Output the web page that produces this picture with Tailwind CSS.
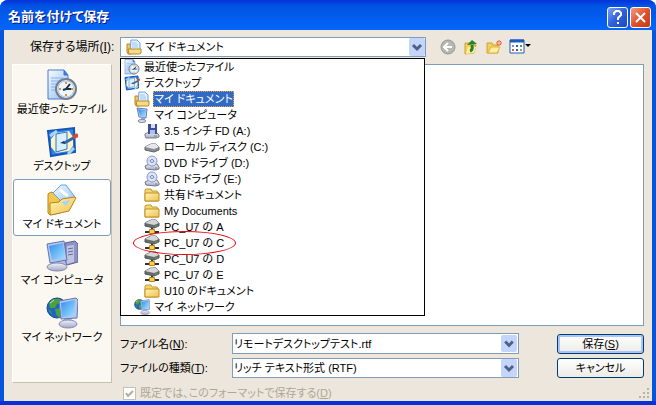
<!DOCTYPE html>
<html lang="ja">
<head>
  <meta charset="UTF-8">
  <meta name="viewport" content="width=device-width, initial-scale=1.0">
  <title>名前を付けて保存</title>
  <!-- Tailwind CSS -->
  <script src="https://cdn.jsdelivr.net/npm/@tailwindcss/browser@4"></script>
</head>
<body class="bg-white font-['Liberation_Sans','Noto_Sans_CJK_JP',sans-serif] text-[11px] leading-4 text-black [font-feature-settings:'palt']">

  <!-- Icon set -->
  <svg class="absolute size-0" aria-hidden="true">
    <defs>
      <linearGradient id="gFolder" x1="0" y1="0" x2="1" y2="1"><stop offset="0" stop-color="#fff6b8"/><stop offset="1" stop-color="#eec04c"/></linearGradient>
      <linearGradient id="gPage" x1="0" y1="0" x2="1" y2="1"><stop offset="0" stop-color="#f4fbff"/><stop offset="1" stop-color="#8fbdf2"/></linearGradient>
      <linearGradient id="gScreen" x1="0" y1="0" x2="1" y2="1"><stop offset="0" stop-color="#2f8df0"/><stop offset="1" stop-color="#a4e2ff"/></linearGradient>
      <linearGradient id="gMetal" x1="0" y1="0" x2="0" y2="1"><stop offset="0" stop-color="#f2f3fa"/><stop offset="1" stop-color="#a2a6c4"/></linearGradient>
    </defs>
    <symbol id="recent" viewBox="0 0 32 32">
      <path d="M2 1h16l4 5v24H2z" fill="url(#gPage)" stroke="#4a7cc8"/>
      <path d="M18 1v5h4" fill="#3d78d8" stroke="#3d78d8"/>
      <path d="M5 9h12M5 12h9M5 15h6M5 18h5M5 21h5" stroke="#84b0ea"/>
      <circle cx="20" cy="20" r="10" fill="#dcecf8" stroke="#747c92" stroke-width="2"/>
      <circle cx="20" cy="20" r="8" fill="#e9f7ff" stroke="#b9c4d6"/>
      <path d="M20 13v2M20 25v2M13 20h2M25 20h2" stroke="#e88c30" stroke-width="2"/>
      <path d="M24 15l-4 5 5 0M20 20l-3 1" fill="none" stroke="#203050" stroke-width="2"/>
    </symbol>
    <symbol id="desktop" viewBox="0 0 32 32">
      <path d="M2 5L28 2l1 24L5 30z" fill="#2f83e4" stroke="#1456b8" stroke-width="2"/>
      <path d="M4 10l7-5M22 28l6-6" stroke="#a5d4ff" stroke-width="3"/>
      <path d="M10 7l13-2 4 6v9l-4 5-13 2-5-6v-8z" fill="#fff3c4"/>
      <path d="M10 8l11-2v17l-11 3z" fill="#d8efff" stroke="#2b74d0" stroke-width="1"/>
      <path d="M18 17l4-2 7-4" fill="none" stroke="#3468a8" stroke-width="3"/>
      <path d="M27 11l5-2" stroke="#e0442c" stroke-width="4"/>
      <path d="M14 17l4-2 1 3z" fill="#16345c"/>
    </symbol>
    <symbol id="docsOpen" viewBox="0 0 32 32">
      <path d="M2 10l3-2 5 2 4-1v20L4 31l-2-2z" fill="#f3c850" stroke="#b98418"/>
      <path d="M15 1h5l9 12-9 9L7 9z" fill="url(#gPage)" stroke="#5fa4e4"/>
      <path d="M14 6l8 6" stroke="#fff" stroke-width="3"/>
      <path d="M4 19l9-1 3-3 13-2 1 1-7 13-18 4-1-2z" fill="url(#gFolder)" stroke="#b98418"/>
      <path d="M15 18l9-2-4 6z" fill="#a4d4fa"/>
    </symbol>
    <symbol id="computer" viewBox="0 0 32 32">
      <path d="M19 3l10-2 3 3v18l-11 3-2-3z" fill="#8d93c4" stroke="#5a609c"/>
      <path d="M21 6l7-1v17l-7 2z" fill="#c0c5e4"/>
      <path d="M22 9l5-1M22 12l5-1M22 15l5-1" stroke="#636a9e"/>
      <path d="M10 19l8-1 2 7h-9z" fill="#b9bfdd"/>
      <ellipse cx="11" cy="27" rx="10" ry="4" fill="url(#gMetal)" stroke="#858bb2"/>
      <path d="M1 4L18 1l3 19-17 3z" fill="#b5c5eb" stroke="#6276b4"/>
      <path d="M3 6l14-3 2 15-13 2z" fill="url(#gScreen)"/>
    </symbol>
    <symbol id="network" viewBox="0 0 32 32">
      <circle cx="11" cy="11" r="10" fill="#1d63c8" stroke="#1a4796"/>
      <path d="M3 6l5-4 6 0 2 4-5 1-2 4-5 0zM9 12l6-1 3 5-5 5-3-4zM2 12l3 2 1 4z" fill="#4aa334"/>
      <path d="M4 6l4-3" stroke="#dff3b4" stroke-width="1"/>
      <path d="M18 20l7-1 1 6h-8z" fill="#aab0d2"/>
      <ellipse cx="22" cy="27" rx="9" ry="4" fill="url(#gMetal)" stroke="#858bb2"/>
      <path d="M13 4l17-3 2 2-1 18-16 1z" fill="#b5c5eb" stroke="#6276b4"/>
      <path d="M15 6l14-3-1 16-12 1z" fill="url(#gScreen)"/>
    </symbol>
    <symbol id="documents" viewBox="0 0 16 16">
      <path d="M1 5h3l1 2v8H2l-1-2z" fill="#f0c95c" stroke="#b4882a"/>
      <path d="M5 1h6l3 3v8H4z" fill="#e6f3ff" stroke="#6f9fdc"/>
      <path d="M6 4h5M6 6h6M6 8h6" stroke="#9cc4f0"/>
      <path d="M2 10h13v4l-1 1H3z" fill="#f7dc84" stroke="#b4882a"/>
    </symbol>
    <symbol id="folder" viewBox="0 0 16 16">
      <path d="M1 14V3l1-1h5l1 2h5l1 2v8z" fill="#f5d66e" stroke="#c59a30"/>
      <path d="M1 14V6h14v8z" fill="url(#gFolder)" stroke="#c08f22"/>
    </symbol>
    <symbol id="floppy" viewBox="0 0 16 16">
      <path d="M1 11l4-2h7l3 3v2l-3 1H2l-1-2z" fill="url(#gMetal)" stroke="#7c7f92"/>
      <path d="M4 1h9v10H4z" fill="#394f9e"/>
      <path d="M7 1h4v4H7z" fill="#d8ddf0"/><path d="M6 7h5v4H6z" fill="#b2bee4"/>
      <path d="M10 13h3" stroke="#48a048"/>
    </symbol>
    <symbol id="drive" viewBox="0 0 16 16">
      <path d="M1 8l6-3h5l3 3v3l-5 2-9-2z" fill="#8b8c94" stroke="#62636c"/>
      <path d="M1 8l6-3h5l3 3-5 2z" fill="#e6e7ea"/>
      <path d="M11 11h3" stroke="#48b048"/>
    </symbol>
    <symbol id="disc" viewBox="0 0 16 16">
      <path d="M1 11l4-2h8l2 3v2l-4 1-9-1z" fill="url(#gMetal)" stroke="#74768c"/>
      <circle cx="8" cy="6" r="5" fill="#dce5fa" stroke="#8d98c0"/>
      <circle cx="8" cy="6" r="1.500" fill="#fff" stroke="#7080b8"/>
      <path d="M4 5l2 1M10 6l2 2" stroke="#b1c9f8"/>
      <path d="M11 13h2" stroke="#48a048"/>
    </symbol>
    <symbol id="netDrive" viewBox="0 0 16 16">
      <path d="M1 4l6-3h5l3 3v3l-5 2-9-2z" fill="#696a70" stroke="#54555c"/>
      <path d="M1 4l6-3h5l3 3-5 2z" fill="#d4d6d8"/>
      <path d="M8 9v3M1 13h14" stroke="#303030" stroke-width="2"/>
      <path d="M11 7h3" stroke="#40c040"/>
      <path d="M5.500 10.500h5v4h-5z" fill="#fbd050" stroke="#b88414"/>
    </symbol>
    <symbol id="pcSmall" viewBox="0 0 16 16">
      <path d="M3 1l10 1-1 9-7-1z" fill="#c4d1ef" stroke="#6a7cb8"/>
      <path d="M4 2l8 1-1 7-5-1z" fill="url(#gScreen)"/>
      <path d="M7 10l4 1v2H7z" fill="#9ea6cc"/>
      <ellipse cx="8" cy="14" rx="4" ry="1.500" fill="#d8dbec" stroke="#8389ac"/>
    </symbol>
    <symbol id="arrow" viewBox="0 0 16 18">
      <path d="M4 7l4 4 4-4" fill="none" stroke="#4d6185" stroke-width="3"/>
    </symbol>
  </svg>

  <div class="flex min-h-screen flex-col rounded-t-lg border-b-4 border-[#0831d9] bg-[#0855dd] px-1">

    <!-- Title bar -->
    <header class="-mx-1 flex h-[30px] items-center rounded-t-lg bg-linear-to-b from-[#0831d9] via-[#0054e3] via-20% to-[#0566fb] pt-1 pr-[5px] pl-2">
      <h1 class="flex-1 text-[13px] font-bold text-white [text-shadow:1px_1px_#0a1883]">名前を付けて保存</h1>
      <div class="flex gap-0.5">
        <button type="button" aria-label="ヘルプ" class="size-[21px] rounded-[3px] border border-white bg-linear-to-br from-[#7da2f5] via-[#2f60dc] to-[#1d48c0]">
          <svg class="size-full" viewBox="0 0 19 19" fill="none" stroke="#fff" stroke-width="2"><path d="M6 7V5l2-2h3l2 2v2l-3 3v2M10 14v2"/></svg>
        </button>
        <button type="button" aria-label="閉じる" class="size-[21px] rounded-[3px] border border-white bg-linear-to-br from-[#f09a80] via-[#e2512c] to-[#c23a12]">
          <svg class="size-full" viewBox="0 0 19 19" fill="none" stroke="#fff" stroke-width="2"><path d="M5 5l9 9M14 5l-9 9"/></svg>
        </button>
      </div>
    </header>

    <form class="relative flex-1 bg-[#ede6dc] px-2 pt-[7px]">
      <!-- Look in -->
      <div class="flex items-center">
        <label for="place" class="w-[108px] pl-[18px] text-[12px]">保存する場所(<u>I</u>):</label>
        <div class="relative w-[306px]">
          <select id="place" class="block h-5 w-full appearance-none border border-[#7f9db9] bg-white pl-6 leading-4">
            <option>マイ ドキュメント</option>
          </select>
          <svg class="absolute top-0.5 left-1.5 size-4"><use href="#documents"/></svg>
          <svg class="pointer-events-none absolute top-px right-px h-[18px] w-4 rounded-xs bg-[#c4d5fc]"><use href="#arrow"/></svg>

          <!-- Open list -->
          <ul role="listbox" aria-label="場所" class="absolute top-[21px] left-0 z-10 w-[305px] border border-black bg-white whitespace-nowrap">
            <li role="option" class="flex h-4 items-center gap-1 pl-[3px]"><svg class="size-4"><use href="#recent"/></svg>最近使ったファイル</li>
            <li role="option" class="flex h-4 items-center gap-1 pl-[3px]"><svg class="size-4"><use href="#desktop"/></svg>デスクトップ</li>
            <li role="option" aria-selected="true" class="flex h-4 items-center gap-[3px] pl-[13px]"><svg class="size-4"><use href="#documents"/></svg><span class="h-4 bg-[#316ac5] px-px text-white outline-1 -outline-offset-1 outline-dotted outline-[#e0a040]">マイ ドキュメント</span></li>
            <li role="option" class="flex h-4 items-center gap-1 pl-[13px]"><svg class="size-4"><use href="#pcSmall"/></svg>マイ コンピュータ</li>
            <li role="option" class="flex h-4 items-center gap-1 pl-[23px]"><svg class="size-4"><use href="#floppy"/></svg>3.5 インチ FD (A:)</li>
            <li role="option" class="flex h-4 items-center gap-1 pl-[23px]"><svg class="size-4"><use href="#drive"/></svg>ローカル ディスク (C:)</li>
            <li role="option" class="flex h-4 items-center gap-1 pl-[23px]"><svg class="size-4"><use href="#disc"/></svg>DVD ドライブ (D:)</li>
            <li role="option" class="flex h-4 items-center gap-1 pl-[23px]"><svg class="size-4"><use href="#disc"/></svg>CD ドライブ (E:)</li>
            <li role="option" class="flex h-4 items-center gap-1 pl-[23px]"><svg class="size-4"><use href="#folder"/></svg>共有ドキュメント</li>
            <li role="option" class="flex h-4 items-center gap-1 pl-[23px]"><svg class="size-4"><use href="#folder"/></svg>My Documents</li>
            <li role="option" class="flex h-4 items-center gap-1 pl-[23px]"><svg class="size-4"><use href="#netDrive"/></svg>PC_U7 の A</li>
            <li role="option" class="relative flex h-4 items-center gap-1 pl-[23px]"><svg class="size-4"><use href="#netDrive"/></svg>PC_U7 の C
              <span class="absolute -top-1 left-3 h-6 w-[103px] rounded-[50%] border border-red-600"></span>
            </li>
            <li role="option" class="flex h-4 items-center gap-1 pl-[23px]"><svg class="size-4"><use href="#netDrive"/></svg>PC_U7 の D</li>
            <li role="option" class="flex h-4 items-center gap-1 pl-[23px]"><svg class="size-4"><use href="#netDrive"/></svg>PC_U7 の E</li>
            <li role="option" class="flex h-4 items-center gap-1 pl-[23px]"><svg class="size-4"><use href="#folder"/></svg>U10 のドキュメント</li>
            <li role="option" class="flex h-4 items-center gap-1 pl-[13px]"><svg class="size-4"><use href="#network"/></svg>マイ ネットワーク</li>
          </ul>
        </div>

        <!-- Toolbar -->
        <div class="ml-[14px] flex items-center gap-[7px]">
          <button type="button" aria-label="戻る">
            <svg class="size-4" viewBox="0 0 16 16"><circle cx="8" cy="8" r="7" fill="#b5b8b0" stroke="#94988f"/><path d="M12 8H5M8 4L4 8l4 4" fill="none" stroke="#fff" stroke-width="2"/></svg>
          </button>
          <button type="button" aria-label="1 つ上のフォルダへ">
            <svg class="size-4" viewBox="0 0 16 16"><path d="M2 4h5l1 2h5l-2 8-9 1z" fill="#f3cf5c" stroke="#d0a22c"/><path d="M5 8h8l-2 6-8 1z" fill="#ffeea0"/><path d="M7 12q3-1 2-6" fill="none" stroke="#23822c" stroke-width="3"/><path d="M4 6l5-5 5 4z" fill="#23822c"/></svg>
          </button>
          <button type="button" aria-label="新しいフォルダの作成">
            <svg class="size-4" viewBox="0 0 16 16"><path d="M1 14V4h5l1 2h5v8z" fill="#f3cf5c" stroke="#d0a22c"/><path d="M2 14l3-6h9l-3 6z" fill="#ffeea0" stroke="#dcb244"/><path d="M13 1v6M10 4h6M11 2l4 4M15 2l-4 4" stroke="#e84c2c"/><circle cx="13" cy="4" r="1" fill="#ffe080"/></svg>
          </button>
          <button type="button" aria-label="表示">
            <svg class="h-4 w-[22px]" viewBox="0 0 22 16"><path d="M1 1h14v13H1z" fill="#fff" stroke="#1a5cc0"/><path d="M1 2h14" stroke="#1a5cc0" stroke-width="3"/><path d="M3 7h2" stroke="#8090b0" stroke-width="2"/><path d="M3 11h2" stroke="#e06030" stroke-width="2"/><path d="M11 7h2" stroke="#48a048" stroke-width="2"/><path d="M7 7h2M7 11h2" stroke="#2860c8" stroke-width="2"/><path d="M11 11h2" stroke="#c09830" stroke-width="2"/><path d="M16 5h6l-3 3z" fill="#000"/></svg>
          </button>
        </div>
      </div>

      <div class="mt-[7px] flex gap-2">
        <!-- Places bar -->
        <nav class="flex min-h-[319px] w-[100px] shrink-0 flex-col self-start border border-white border-r-[#c5c0b4] border-b-[#c5c0b4] bg-[#fbf8f1] text-center whitespace-nowrap">
          <a href="#recent" class="flex h-[57px] flex-col items-center pt-1"><svg class="size-8 shrink-0"><use href="#recent"/></svg>最近使ったファイル</a>
          <a href="#desktop" class="flex h-[57px] flex-col items-center pt-1"><svg class="size-8 shrink-0"><use href="#desktop"/></svg>デスクトップ</a>
          <a href="#docsOpen" class="flex h-[57px] flex-col items-center rounded-[3px] border border-[#7f9db9] bg-white pt-1"><svg class="size-8 shrink-0"><use href="#docsOpen"/></svg>マイ ドキュメント</a>
          <a href="#computer" class="flex h-[57px] flex-col items-center pt-1"><svg class="size-8 shrink-0"><use href="#computer"/></svg>マイ コンピュータ</a>
          <a href="#network" class="flex h-[57px] flex-col items-center pt-1"><svg class="size-8 shrink-0"><use href="#network"/></svg>マイ ネットワーク</a>
        </nav>

        <div class="min-w-0 flex-1">
          <!-- File list -->
          <div class="h-[262px] border border-[#7f9db9] bg-white"></div>

          <div class="mt-[7px] grid grid-cols-[112px_1fr_87px] items-center gap-y-1">
            <label for="filename">ファイル名(<u>N</u>):</label>
            <div class="mr-[38px] flex h-[21px] border border-[#7f9db9] bg-white p-px">
              <input id="filename" type="text" value="リモートデスクトップテスト.rtf" class="min-w-0 flex-1 outline-none">
              <button type="button" aria-label="履歴" class="w-4 rounded-xs bg-[#c4d5fc]"><svg class="h-full w-4"><use href="#arrow"/></svg></button>
            </div>
            <button type="submit" class="h-5 rounded-[3px] border border-[#003c74] bg-linear-to-b from-white to-[#ecebe6] leading-4 inset-ring-2 inset-ring-[#a9c4f5]">保存(<u>S</u>)</button>

            <label for="filetype">ファイルの種類(<u>T</u>):</label>
            <div class="relative mr-[38px]">
              <select id="filetype" class="block h-5 w-full appearance-none border border-[#7f9db9] bg-white pl-px leading-4">
                <option>リッチ テキスト形式 (RTF)</option>
              </select>
              <svg class="pointer-events-none absolute top-px right-0.5 h-[18px] w-4 rounded-xs bg-[#c4d5fc]"><use href="#arrow"/></svg>
            </div>
            <button type="button" class="h-5 rounded-[3px] border border-[#003c74] bg-linear-to-b from-white to-[#ecebe6] leading-4">キャンセル</button>
          </div>

          <label class="mt-[7px] flex items-center gap-1 pl-[3px] text-[#aca899]">
            <span class="relative size-[13px]">
              <input type="checkbox" checked disabled class="block size-[13px] appearance-none border border-[#c4c0b2] bg-white">
              <svg class="absolute inset-0 size-[13px]" viewBox="0 0 13 13"><path d="M3 6l2 3 5-5" fill="none" stroke="#b0ac9e" stroke-width="2"/></svg>
            </span>
            <span>既定では、このフォーマットで保存する(<u>D</u>)</span>
          </label>
        </div>
      </div>

      <!-- Resize grip -->
      <svg class="absolute right-0.5 bottom-0.5 size-3" viewBox="0 0 12 12" fill="#b8b4a2"><path d="M9 1h2v2H9zM5 5h2v2H5zM9 5h2v2H9zM1 9h2v2H1zM5 9h2v2H5zM9 9h2v2H9z"/></svg>
    </form>
  </div>
</body>
</html>
